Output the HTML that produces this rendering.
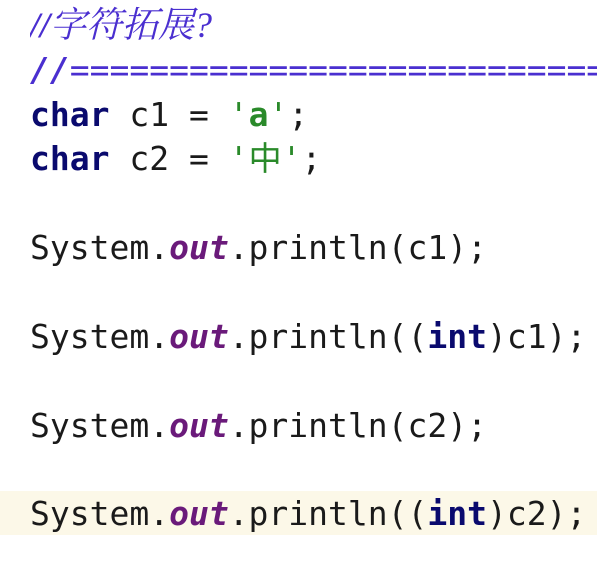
<!DOCTYPE html>
<html><head><meta charset="utf-8"><style>
html,body{margin:0;padding:0;background:#fff;width:597px;height:571px;overflow:hidden}
.code{position:absolute;left:30px;top:3px;width:567px;overflow:hidden;font-family:"DejaVu Sans Mono","Noto Sans CJK SC",monospace;font-size:33px;line-height:44.4px;color:#1a1a1a;white-space:pre}
.hl{position:absolute;left:0;top:491px;width:597px;height:44px;background:#fcf8e8}
.cm{color:#4a2fd0;font-style:italic}
.kw{color:#0a0a6e;font-weight:bold}
.st{color:#2a8a2a}
.f{color:#6a1a7a;font-style:italic;font-weight:bold}
</style></head><body>
<div class="hl"></div>
<div class="code"><span class="cm" style="font-family:'Liberation Serif','Noto Serif CJK SC',serif;font-size:36px"><b>//</b>字符拓展?</span>
<span class="cm"><b>//</b>================================</span>
<span class="kw">char</span> c1 = <span class="st">'<b>a</b>'</span>;
<span class="kw">char</span> c2 = <span class="st">'中'</span>;

System.<span class="f">out</span>.println(c1);

System.<span class="f">out</span>.println((<span class="kw">int</span>)c1);

System.<span class="f">out</span>.println(c2);

System.<span class="f">out</span>.println((<span class="kw">int</span>)c2);</div>
</body></html>
